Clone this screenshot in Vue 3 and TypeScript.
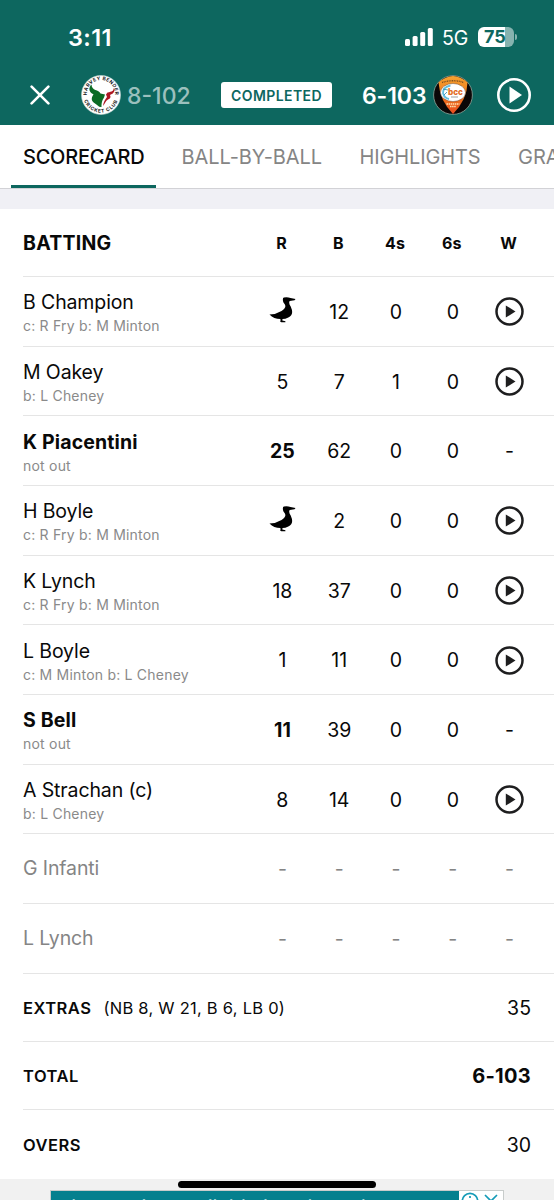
<script setup lang="ts">
interface Batter {
  name: string
  how?: string
  runs: string
  balls: string
  fours: string
  sixes: string
  video?: boolean
  notOut?: boolean
  waiting?: boolean
}

const tabs = ['SCORECARD', 'BALL-BY-BALL', 'HIGHLIGHTS', 'GRAPHS']
const columns = ['R', 'B', '4s', '6s', 'W']

const batters: Batter[] = [
  { name: 'B Champion', how: 'c: R Fry b: M Minton', runs: 'duck', balls: '12', fours: '0', sixes: '0', video: true },
  { name: 'M Oakey', how: 'b: L Cheney', runs: '5', balls: '7', fours: '1', sixes: '0', video: true },
  { name: 'K Piacentini', how: 'not out', runs: '25', balls: '62', fours: '0', sixes: '0', notOut: true },
  { name: 'H Boyle', how: 'c: R Fry b: M Minton', runs: 'duck', balls: '2', fours: '0', sixes: '0', video: true },
  { name: 'K Lynch', how: 'c: R Fry b: M Minton', runs: '18', balls: '37', fours: '0', sixes: '0', video: true },
  { name: 'L Boyle', how: 'c: M Minton b: L Cheney', runs: '1', balls: '11', fours: '0', sixes: '0', video: true },
  { name: 'S Bell', how: 'not out', runs: '11', balls: '39', fours: '0', sixes: '0', notOut: true },
  { name: 'A Strachan (c)', how: 'b: L Cheney', runs: '8', balls: '14', fours: '0', sixes: '0', video: true },
  { name: 'G Infanti', runs: '-', balls: '-', fours: '-', sixes: '-', waiting: true },
  { name: 'L Lynch', runs: '-', balls: '-', fours: '-', sixes: '-', waiting: true },
]
</script>

<template>
  <div class="screen">
    <header class="top">
      <div class="status">
        <span class="clock">3:11</span>
        <svg class="signal" width="28" height="18" viewBox="0 0 28 18" fill="#fff">
          <rect x="0" y="11" width="5" height="7" rx="1.5" />
          <rect x="7.6" y="8" width="5" height="10" rx="1.5" />
          <rect x="15.2" y="4" width="5" height="14" rx="1.5" />
          <rect x="22.8" y="0" width="5" height="18" rx="1.5" />
        </svg>
        <span class="network">5G</span>
        <div class="battery"><span>75</span></div>
        <i class="nub"></i>
      </div>
      <div class="match">
        <svg class="close" width="20" height="20" viewBox="0 0 20 20" stroke="#fff" stroke-width="2.6" stroke-linecap="round">
          <path d="M1.6 1.6 18.4 18.4M18.4 1.6 1.6 18.4" />
        </svg>
        <svg class="crest home" width="40" height="40" viewBox="0 0 40 40">
          <defs>
            <path id="arc-top" d="M7.500 26A14.200 14.200 0 1 1 32.500 26" />
            <path id="arc-bottom" d="M2.300 20a17.700 17.700 0 0 0 35.400 0" />
          </defs>
          <circle cx="20" cy="20" r="19.5" fill="#fff" stroke="#c8d8d5" stroke-width=".6" />
          <text class="ring"><textPath href="#arc-top" startOffset="50%" text-anchor="middle">HARVEY BENDER</textPath></text>
          <text class="ring lower"><textPath href="#arc-bottom" startOffset="50%" text-anchor="middle">CRICKET CLUB</textPath></text>
          <path fill="#0b6b24" d="M10.500 9.500C7 13 8 17.500 12.500 19.200C10 23 10 26 14 28.500C17 30 17.500 32.500 20.500 32C20.500 27 21.500 25 23 22.500L24 19.500L19.500 18.500C18 14.500 10.500 16 10.500 9.500Z" />
          <path fill="#ad1924" d="M32.500 13C33 16 31 16.500 26.500 17.500L25 19.500L26 22C24 24.500 22.500 27 22 31C24 29 24.500 26 27 24.500C29.500 24 30 22 29 20C33 18.500 34.500 15.500 32.500 13Z" />
        </svg>
        <span class="score first">8-102</span>
        <span class="badge">COMPLETED</span>
        <span class="score second">6-103</span>
        <svg class="crest away" width="40" height="40" viewBox="0 0 40 40">
          <defs>
            <linearGradient id="flame" x2="0" y2="1"><stop stop-color="#f5a331" /><stop offset=".5" stop-color="#f07a1c" /><stop offset="1" stop-color="#e84b20" /></linearGradient>
          </defs>
          <circle cx="20" cy="20" r="19.400" fill="#0b0707" stroke="#91a69b" stroke-width=".8" />
          <path fill="url(#flame)" d="M5.500 7.500Q20-5.500 34.500 7.500Q34 25 20 39Q7 26 5.500 7.500Z" />
          <path fill="none" stroke="#805020" stroke-width="1.400" stroke-dasharray="1 .7" d="M9 7.500Q20 4 31 7.500" />
          <ellipse cx="20" cy="17.500" rx="12.500" ry="9" fill="#fff" stroke="#6d5547" stroke-width=".5" />
          <path fill="none" stroke="#61bddd" stroke-width="1.800" d="M17.500 10.500Q10 12 10 18Q11 23 16 24" />
          <path fill="none" stroke="#278aaf" stroke-width=".8" d="M10 14l5 1M11 20l3-3" />
          <text class="club" x="15" y="19.500" textLength="15" lengthAdjust="spacingAndGlyphs">bcc</text>
          <path stroke="#ffe1b1" stroke-width="1.300" stroke-dasharray="1.500 .6" d="M13.500 29h13M17 31.500h6" />
          <path stroke="#777" stroke-width=".7" d="M18 22h7" />
        </svg>
        <svg class="play" width="34" height="34" viewBox="0 0 34 34">
          <circle cx="17" cy="17" r="15.700" fill="none" stroke="#fff" stroke-width="2.600" />
          <path fill="#fff" d="M12.500 8.500v17L25 17Z" />
        </svg>
      </div>
    </header>

    <nav class="tabs">
      <span v-for="(tab, i) in tabs" :key="tab" :class="['tab', { active: i === 0 }]">{{ tab }}</span>
    </nav>
    <div class="gap"></div>

    <main class="card">
      <div class="grid head">
        <h2>BATTING</h2>
        <span v-for="c in columns" :key="c">{{ c }}</span>
      </div>
      <div v-for="b in batters" :key="b.name" :class="['grid', 'row', { bold: b.notOut, waiting: b.waiting }]">
        <div class="player">
          <div class="name">{{ b.name }}</div>
          <div v-if="b.how" class="how">{{ b.how }}</div>
        </div>
        <span class="cell runs">
          <svg v-if="b.runs === 'duck'" class="duck" width="27" height="26" viewBox="0 0 28 26" preserveAspectRatio="none">
            <path d="M.5 17.500Q7 17.500 13 14Q17 11.500 17 9Q17 7.500 15 5.500Q13.500 1 15.500 .5Q19-.2 22.300 1L27.500 2L26.500 3.300L21.500 4Q20 6 22.500 9.500Q26.500 18 20 20.500Q17 22 14 22L13.800 23.500L17 24.300V25.300H12.800L11.500 24.500L12 23.500L11.800 22Q5 22 .5 17.500Z" />
          </svg>
          <template v-else>{{ b.runs }}</template>
        </span>
        <span class="cell">{{ b.balls }}</span>
        <span class="cell">{{ b.fours }}</span>
        <span class="cell">{{ b.sixes }}</span>
        <span class="cell">
          <svg v-if="b.video" class="watch" width="29" height="29" viewBox="0 0 29 29">
            <circle cx="14.500" cy="14.500" r="13" fill="none" stroke="#1e1e1f" stroke-width="2.500" />
            <path fill="#1e1e1f" d="M10.800 8.500v12L20.500 14.500Z" />
          </svg>
          <template v-else>-</template>
        </span>
      </div>
      <div class="summary"><b class="extras">EXTRAS</b><span class="detail">(NB 8, W 21, B 6, LB 0)</span><span class="value">35</span></div>
      <div class="summary"><b>TOTAL</b><span class="value strong">6-103</span></div>
      <div class="summary last"><b>OVERS</b><span class="value">30</span></div>
    </main>

    <footer class="bottom">
      <div class="indicator"></div>
      <div class="ad">
        <span class="copy">Last trains available in selected areas</span>
        <svg class="choices" width="44" height="30" viewBox="0 0 44 30" fill="none" stroke="#149bb7" stroke-width="1.700">
          <circle cx="11" cy="10" r="7.700" /><path d="M11 5v2M11 9v5M26 4l12 12M38 4L26 16" />
        </svg>
      </div>
    </footer>
  </div>
</template>

<style>
body { margin: 0; overflow: hidden; }
</style>

<style scoped>
* { box-sizing: border-box; }
.screen { width: 554px; height: 1200px; overflow: hidden; background: #fff; color: #090909; font-family: Inter, "Liberation Sans", sans-serif; display: flex; flex-direction: column; }
.screen > * { flex-shrink: 0; }
.top { height: 125px; background: #0d675f; color: #fff; }
.status { height: 65px; padding: 11px 0 2px; display: flex; align-items: center; }
.clock { margin-left: 68px; width: 337px; padding-top: 1px; font-size: 23.500px; font-weight: 600; letter-spacing: .4px; }
.network { margin-left: 9px; width: 27px; padding-top: 1px; font-size: 19.500px; }
.battery { margin-left: 9px; width: 36px; height: 20px; border-radius: 6px; background: linear-gradient(90deg, #fff 76%, #86b3af 76%); color: #0d675f; font-size: 18px; font-weight: 700; line-height: 20px; padding-left: 6px; }
.nub { width: 2px; height: 6px; margin-left: 1px; border-radius: 0 2px 2px 0; background: #86b3af; }
.match { height: 60px; display: flex; align-items: center; }
.close { margin-left: 30px; }
.home { margin-left: 31px; }
.ring { font-size: 4.900px; font-weight: 700; letter-spacing: .35px; fill: #222; }
.lower { letter-spacing: .7px; }
.score { font-size: 23px; padding-top: 1px; }
.first { margin-left: 6px; width: 94px; color: #9bc0bd; font-weight: 500; letter-spacing: 0; }
.badge { width: 111px; height: 26px; border-radius: 3px; background: #fff; color: #0d675f; font-size: 14px; line-height: 27px; font-weight: 600; letter-spacing: .4px; text-align: center; }
.second { margin-left: 30px; width: 71px; font-weight: 600; letter-spacing: -.1px; }
.club { font-size: 9px; font-weight: 800; fill: #e26c1d; }
.play { margin-left: 24px; }
.tabs { height: 63px; display: flex; gap: 13.500px; padding-left: 11px; overflow: hidden; }
.tab { height: 63px; padding: 0 12px; line-height: 64px; font-size: 20px; letter-spacing: -.05px; color: #858585; white-space: nowrap; }
.active { width: 145px; letter-spacing: -.25px; color: #090909; border-bottom: 3px solid #0d675f; font-weight: 500; }
.tab:nth-child(2) { letter-spacing: -.08px; }
.tab:nth-child(3) { letter-spacing: -.12px; }
.gap { height: 21px; background: #f0f0f5; border-top: 1px solid #d2d2d6; }
.grid { display: grid; grid-template-columns: 231px repeat(5, 56.800px); align-items: center; margin-left: 23px; border-bottom: 1px solid #e5e5e5; }
.head { height: 68px; padding-top: 1px; font-size: 16px; font-weight: 700; text-align: center; }
.head span { position: relative; left: -1px; }
h2 { margin: 0; font-size: 19.500px; letter-spacing: .25px; text-align: left; }
.row { height: 69.680px; }
.player { padding-top: 5px; }
.name { font-size: 19.500px; line-height: 25px; letter-spacing: -.12px; }
.how { height: 22px; font-size: 14px; line-height: 22px; letter-spacing: .21px; color: #8a8a8a; }
.cell { display: flex; align-items: center; justify-content: center; padding-top: 1px; font-size: 19.500px; }
.duck { margin: -4px 0 0 1px; }
.bold .name, .bold .runs { font-weight: 700; }
.bold .name { letter-spacing: .15px; }
.waiting { color: #858585; }
.waiting .player { padding-top: 0; }
.summary { height: 68px; margin-left: 23px; padding: 2px 23px 0 0; border-bottom: 1px solid #e5e5e5; display: flex; align-items: center; font-size: 16.500px; }
.summary b { font-weight: 600; letter-spacing: .5px; }
.detail { margin-left: 12px; letter-spacing: .25px; }
.value { margin-left: auto; font-size: 19.500px; }
.strong { font-weight: 700; font-size: 20px; letter-spacing: .3px; }
.last { height: 69px; border: 0; }
.bottom { flex: 1; min-height: 0; background: #f1f1f1; display: flex; flex-direction: column; padding-top: 2px; }
.indicator { width: 198px; height: 7px; margin-left: 178px; border-radius: 4px; background: #000; flex-shrink: 0; }
.ad { margin: 2px 0 0 50px; width: 454px; height: 30px; background: #05808e; border: 1px solid #c8cccb; display: flex; justify-content: space-between; flex-shrink: 0; }
.copy { padding: 4px 0 0 20px; color: #a5d6da; font-size: 20px; white-space: nowrap; }
.choices { background: #fff; height: 30px; flex-shrink: 0; }
</style>
